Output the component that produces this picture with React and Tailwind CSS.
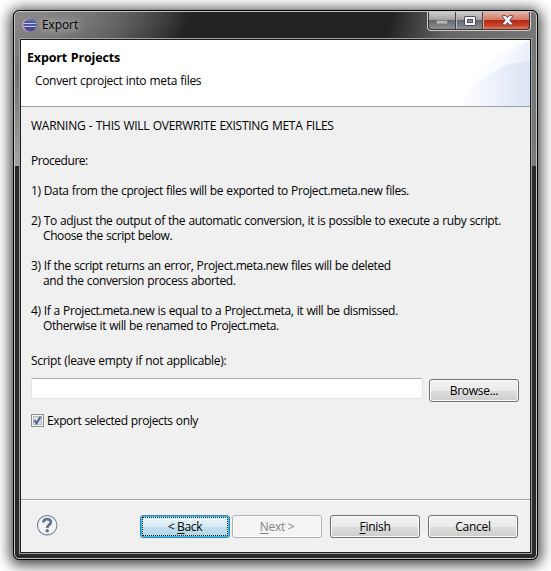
import React from "react";

function Line({ children, className = "" }) {
  return <div className={`h-[15px] whitespace-pre leading-[15px] ${className}`}>{children}</div>;
}

function Button({ children, variant = "normal", className = "" }) {
  const look = {
    normal:
      "border-[#707070] bg-[linear-gradient(#f3f3f3,#ebebeb_50%,#dddddd_51%,#cdcdcd)] shadow-[inset_0_0_0_1px_#fbfbfb]",
    focus:
      "border-[#3c7fb1] bg-[linear-gradient(#eaf4fa,#d8eaf4_50%,#c3dfec_51%,#b0d5e6)] shadow-[inset_0_0_0_1px_#2cc8f5]",
    disabled: "border-[#adb2b5] bg-[#f4f4f4] text-[#838383] shadow-[inset_0_0_0_1px_#fcfcfc]",
  }[variant];
  return (
    <button className={`flex h-[23px] w-[90px] shrink-0 items-stretch rounded-[3px] border p-px ${look} ${className}`}>
      <span
        className={`flex flex-1 items-center justify-center whitespace-pre leading-[15px] tracking-[-0.3px] ${
          variant === "focus" ? "border border-dotted border-[#20180f]" : ""
        }`}
      >
        {children}
      </span>
    </button>
  );
}

function Key({ children }) {
  return <span className="underline decoration-1 underline-offset-2">{children}</span>;
}

function EclipseIcon() {
  return (
    <svg width="15" height="14" viewBox="0 0 15 14">
      <defs>
        <linearGradient id="ball" x1="0" y1="0" x2="0" y2="1">
          <stop offset="0" stopColor="#8384c4" />
          <stop offset="0.45" stopColor="#383b86" />
          <stop offset="1" stopColor="#5450a0" />
        </linearGradient>
      </defs>
      <circle cx="6.5" cy="7" r="6.5" fill="#dba6b5" />
      <circle cx="8" cy="7" r="6.5" fill="url(#ball)" />
      <path d="M2 5.5H14M2 8.5H14" stroke="#b8d0ea" />
      <path d="M2 7H14" stroke="#5d78b8" />
    </svg>
  );
}

function TitleButtons() {
  return (
    <div className="mr-[5px] flex h-[19px] w-[104px] rounded-b-[4px] border border-t-0 border-[#d0d0d0] bg-[#333] p-px pt-0">
      <div className="flex w-[27px] items-center justify-center rounded-bl-[3px] border-r border-[#444] bg-[linear-gradient(#cfcfcf,#a0a0a0_47%,#63676a_50%,#8f9193)]">
        <svg width="12" height="8" className="mt-[7px]">
          <rect x="0.5" y="0.5" width="11" height="3.5" fill="#b8b8b8" stroke="#808080" />
        </svg>
      </div>
      <div className="flex w-[27px] items-center justify-center border-x border-l-[#bbb] border-r-[#444] bg-[linear-gradient(#cfcfcf,#a0a0a0_47%,#63676a_50%,#8f9193)]">
        <svg width="12" height="10">
          <rect x="0.5" y="0.5" width="11" height="9" rx="0.5" fill="#f5f5f5" stroke="#4d5262" />
          <rect x="3.5" y="3.5" width="5" height="3" fill="#8b8b8b" stroke="#4d5262" />
        </svg>
      </div>
      <div className="flex flex-1 items-center justify-center rounded-br-[3px] border-l border-[#e3a79a] bg-[linear-gradient(#e6b3a8,#cf7665_47%,#b42a12_50%,#c9432a_80%,#e27c61)]">
        <svg width="13" height="11" viewBox="0 0 13 11" className="ml-px">
          <path
            d="M1.5 .6H4.7L6.5 2.8L8.3 .6H11.5V1.8L8.9 5.2L11.5 8.7V9.9H8.3L6.5 7.6L4.7 9.9H1.5V8.7L4.1 5.2L1.5 1.8Z"
            fill="#f7f7f7"
            stroke="#5a4658"
          />
        </svg>
      </div>
    </div>
  );
}

function TitleBar() {
  return (
    <div className="flex h-[26px] items-start justify-between">
      <div className="flex h-[25px] items-center pl-[7px]">
        <EclipseIcon />
        <span className="ml-[5px] text-[12px] leading-[15px] tracking-[-0.1px] [text-shadow:0_0_6px_#bbb,0_0_10px_#bbb,0_0_12px_#aaa]">
          Export
        </span>
      </div>
      <TitleButtons />
    </div>
  );
}

function Header() {
  return (
    <header className="relative h-[67px] shrink-0 border-b border-[#a0a0a0] bg-white pl-[6px] pt-[10px]">
      <svg className="absolute right-0 top-0" width="76" height="66" viewBox="0 0 76 66">
        <defs>
          <linearGradient id="arc" x1="0" x2="1">
            <stop offset="0" stopColor="#ffffff" />
            <stop offset="1" stopColor="#dbe4f6" />
          </linearGradient>
          <linearGradient id="arc2" x1="0" x2="1">
            <stop offset="0" stopColor="#ffffff" />
            <stop offset="1" stopColor="#e5ecf9" />
          </linearGradient>
        </defs>
        <path d="M5 66C17 36 42 10 76 0V66Z" fill="url(#arc2)" opacity="0.4" />
        <path d="M28 66C36 36 50 12 76 1V66Z" fill="url(#arc2)" opacity="0.7" />
        <path d="M5 66C22 38 46 23 76 21V66Z" fill="url(#arc)" />
      </svg>
      <h1 className="h-[15px] whitespace-pre text-[12.5px] font-bold leading-[15px] tracking-[-0.14px]">Export Projects</h1>
      <p className="ml-[8px] mt-[8px] h-[15px] whitespace-pre leading-[15px] tracking-[-0.33px]">
        Convert cproject into meta files
      </p>
    </header>
  );
}

function Instructions() {
  return (
    <div className="flex flex-col gap-[15px]">
      <Line className="mb-[5px] tracking-[-0.26px]">WARNING - THIS WILL OVERWRITE EXISTING META FILES</Line>
      <Line className="tracking-[-0.45px]">Procedure:</Line>
      <Line>1) Data from the cproject files will be exported to Project.meta.new files.</Line>
      <div>
        <Line>2) To adjust the output of the automatic conversion, it is possible to execute a ruby script.</Line>
        <Line className="pl-[12px]">Choose the script below.</Line>
      </div>
      <div>
        <Line>3) If the script returns an error, Project.meta.new files will be deleted</Line>
        <Line className="pl-[12px]">and the conversion process aborted.</Line>
      </div>
      <div>
        <Line>4) If a Project.meta.new is equal to a Project.meta, it will be dismissed.</Line>
        <Line className="pl-[12px] tracking-[-0.44px]">Otherwise it will be renamed to Project.meta.</Line>
      </div>
    </div>
  );
}

export default function App() {
  return (
    <main className="h-[571px] w-[551px] overflow-hidden bg-white pl-[13px] pt-[10px] font-['Open_Sans','Noto_Sans',sans-serif] text-[12px] tracking-[-0.4px] text-black [word-spacing:0.5px]">
      <div className="h-[550px] w-[525px] rounded-[6px] border border-black bg-[#292b2b] shadow-[0_2px_14px_3px_rgba(0,0,0,0.75)]">
        <div className="h-[548px] rounded-[5px] border border-[#c4c4c4] bg-[linear-gradient(transparent_60px,rgba(200,200,200,0.6)_154px),radial-gradient(ellipse_180px_60px_at_0_0,#8a8a8a,transparent),linear-gradient(100deg,#777_0,#555_80px,#222_170px,#222_370px,#666_430px,#7a7a7a_100%)] bg-[length:20px_154px,100%_154px,100%_154px] bg-no-repeat">
          <TitleBar />
          <div className="ml-[4px] h-[516px] w-[513px] border border-[#a2a2a2]">
            <div className="flex h-[514px] flex-col border border-[#1c1c1c] bg-[#f0f0f0]">
              <Header />
              <section className="h-[392px] px-[10px] pt-[11px]">
                <Instructions />
                <Line className="mt-[20px] tracking-[-0.32px]">Script (leave empty if not applicable):</Line>
                <div className="mt-[10px] flex h-[24px] items-start justify-between pr-px">
                  <input className="h-[21px] w-[392px] rounded-[2px] border border-[#e2e3ea] border-t-[#abadb3] bg-white" />
                  <Button className="mt-px">Browse...</Button>
                </div>
                <label className="mt-[11px] flex h-[15px] items-center">
                  <svg width="13" height="13" viewBox="0 0 13 13">
                    <rect x=".5" y=".5" width="12" height="12" fill="#f4f4f4" stroke="#8e8f8f" />
                    <rect x="2.5" y="2.5" width="8" height="8" fill="#dce0e5" stroke="#b4bbc4" />
                    <path d="M3.5 6.3L5.6 9.2L9.5 2.7" fill="none" stroke="#4b5f97" strokeWidth="2" />
                  </svg>
                  <span className="ml-[3px] whitespace-pre leading-[15px]">Export selected projects only</span>
                </label>
              </section>
              <footer className="flex flex-1 items-start border-t border-[#a0a0a0] pl-[16px] pt-[15px] shadow-[inset_0_1px_0_#fff]">
                <svg width="21" height="21" viewBox="0 0 21 21">
                  <circle cx="10.2" cy="10.2" r="9.7" fill="#f2f4f7" stroke="#75849d" strokeWidth="1.1" />
                  <path d="M6.4 7.6C6.4 2.9 13.9 3.1 13.9 7.1C13.9 9.8 10.2 10 10.2 13" fill="none" stroke="#64748f" strokeWidth="2.8" />
                  <circle cx="10.2" cy="15.8" r="1.7" fill="#64748f" />
                </svg>
                <div className="ml-[82px] flex">
                  <Button variant="focus">{"< "}<Key>B</Key>ack</Button>
                  <Button variant="disabled" className="ml-[2px]"><Key>N</Key>ext &gt;</Button>
                  <Button className="ml-[8px]"><Key>F</Key>inish</Button>
                  <Button className="ml-[8px]">Cancel</Button>
                </div>
              </footer>
            </div>
          </div>
        </div>
      </div>
    </main>
  );
}
